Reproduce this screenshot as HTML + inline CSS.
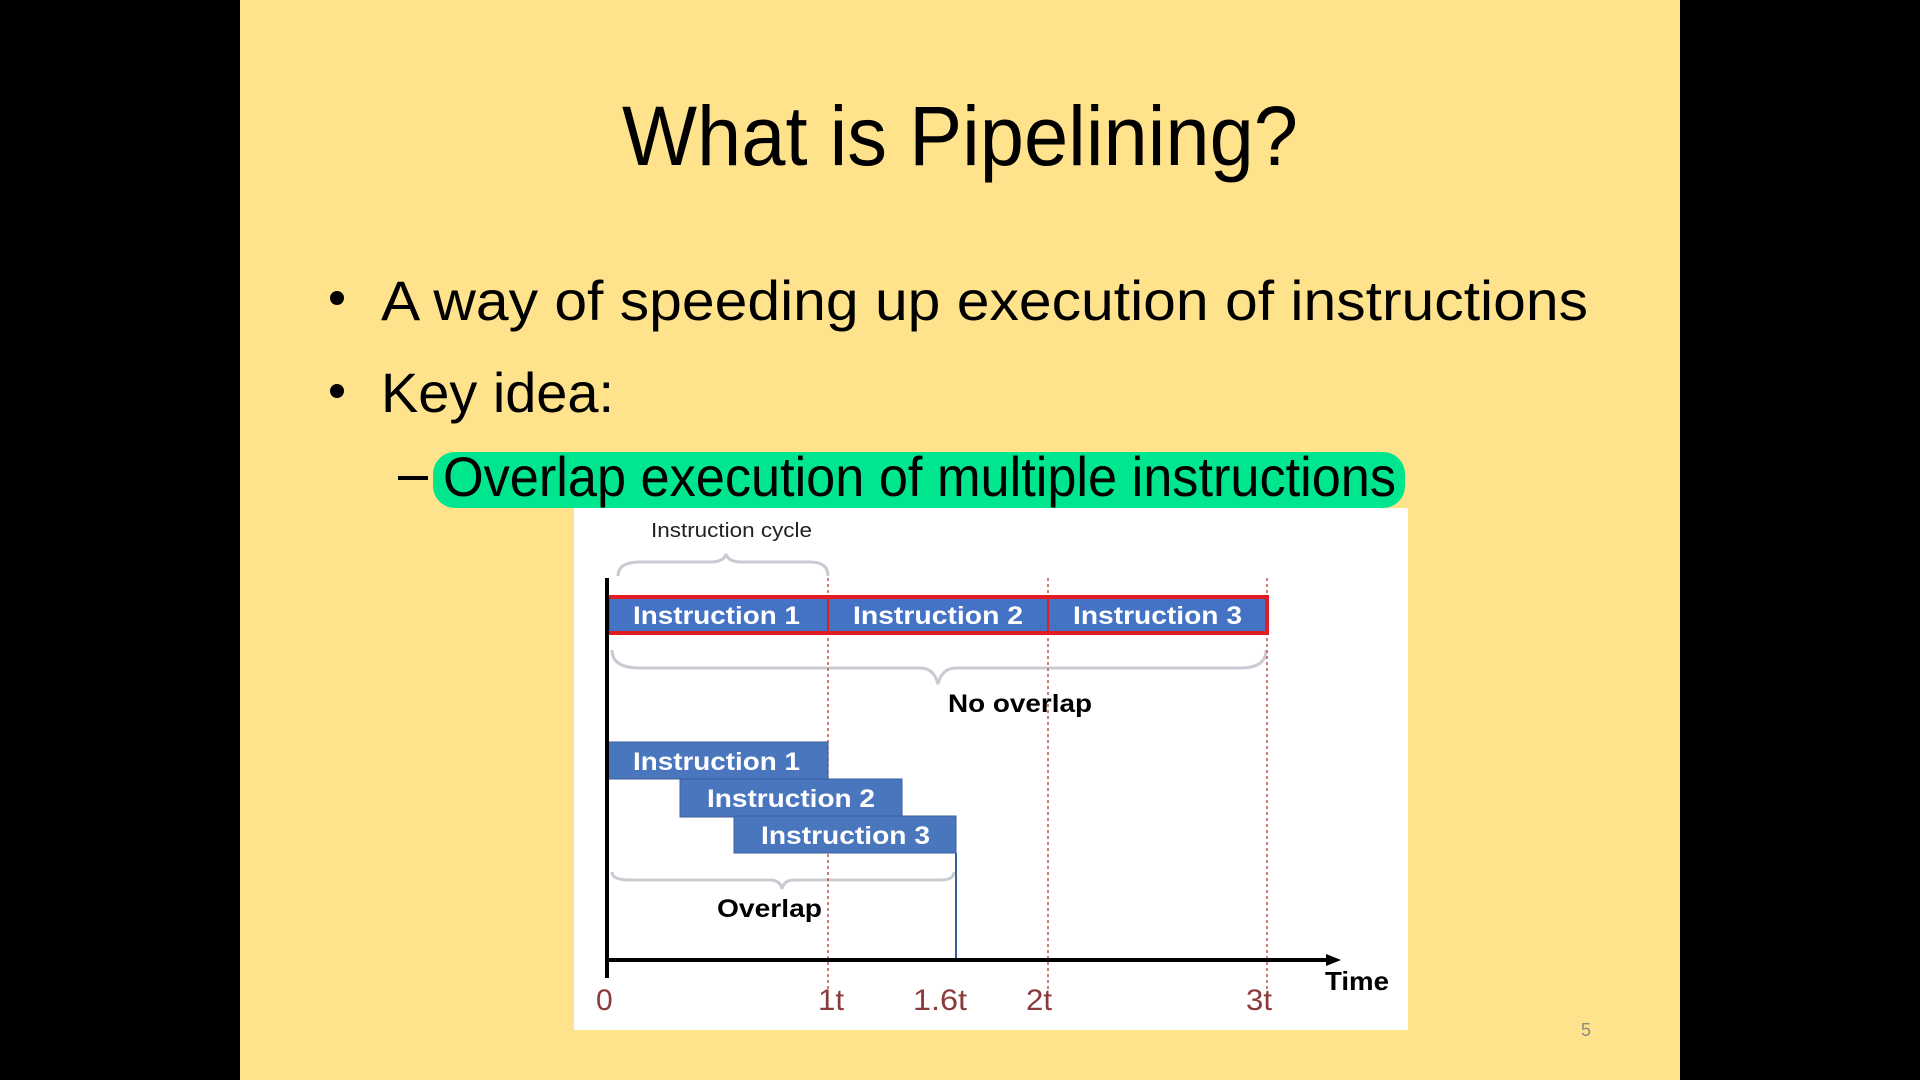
<!DOCTYPE html>
<html><head><meta charset="utf-8"><style>
html,body{margin:0;padding:0;background:#000;width:1920px;height:1080px;overflow:hidden}
svg{display:block}
</style></head><body>
<svg width="1920" height="1080" viewBox="0 0 1920 1080" xmlns="http://www.w3.org/2000/svg" font-family="Liberation Sans, sans-serif">
<rect x="0" y="0" width="1920" height="1080" fill="#000"/>
<rect x="240" y="0" width="1440" height="1080" fill="#ffe38c"/>
<text x="622" y="165" font-size="84" textLength="676" lengthAdjust="spacingAndGlyphs" fill="#000">What is Pipelining?</text>
<circle cx="337" cy="298" r="7" fill="#000"/>
<text x="381" y="320" font-size="56" textLength="1207" lengthAdjust="spacingAndGlyphs" fill="#000">A way of speeding up execution of instructions</text>
<circle cx="337" cy="391" r="7" fill="#000"/>
<text x="381" y="412" font-size="56" textLength="233" lengthAdjust="spacingAndGlyphs" fill="#000">Key idea:</text>
<rect x="398" y="476" width="30" height="4" fill="#000"/>
<rect x="433" y="452" width="972" height="56" rx="22" fill="#00e68e"/>
<text x="443" y="496" font-size="56" textLength="953" lengthAdjust="spacingAndGlyphs" fill="#000">Overlap execution of multiple instructions</text>
<!-- diagram -->
<rect x="574" y="508" width="834" height="522" fill="#fff"/>
<text x="651" y="537" font-size="20" textLength="161" lengthAdjust="spacingAndGlyphs" fill="#222">Instruction cycle</text>
<g fill="none" stroke="#c8ccd2" stroke-width="3">
<path d="M618 576 Q618 562 640 562 L710 562 Q724 562 726 554 Q728 562 742 562 L810 562 Q828 562 828 576"/>
<path d="M612 650 Q612 668 640 668 L920 668 Q934 668 938 684 Q942 668 956 668 L1240 668 Q1266 668 1266 650"/>
<path d="M612 872 Q612 880 630 880 L770 880 Q780 880 782 889 Q784 880 794 880 L940 880 Q954 880 954 872"/>
</g>
<g stroke="#c0504d" stroke-width="1.5" stroke-dasharray="3,3">
<line x1="828" y1="578" x2="828" y2="990"/>
<line x1="1048" y1="578" x2="1048" y2="990"/>
<line x1="1267" y1="578" x2="1267" y2="990"/>
</g>
<rect x="608" y="597" width="659" height="36" fill="#4472c4" stroke="#e31b23" stroke-width="4"/>
<line x1="828" y1="597" x2="828" y2="633" stroke="#e31b23" stroke-width="2"/>
<line x1="1048" y1="597" x2="1048" y2="633" stroke="#e31b23" stroke-width="2"/>
<g fill="#fff" font-weight="bold" font-size="25">
<text x="633" y="624" textLength="167" lengthAdjust="spacingAndGlyphs">Instruction 1</text>
<text x="853" y="624" textLength="170" lengthAdjust="spacingAndGlyphs">Instruction 2</text>
<text x="1073" y="624" textLength="169" lengthAdjust="spacingAndGlyphs">Instruction 3</text>
</g>
<text x="948" y="712" font-size="25" font-weight="bold" textLength="144" lengthAdjust="spacingAndGlyphs" fill="#000">No overlap</text>
<rect x="608" y="742" width="220" height="37" fill="#4a76bd" stroke="#3a5f9a" stroke-width="1"/>
<rect x="680" y="779" width="222" height="38" fill="#4a76bd" stroke="#3a5f9a" stroke-width="1"/>
<rect x="734" y="816" width="222" height="37" fill="#4a76bd" stroke="#3a5f9a" stroke-width="1"/>
<g fill="#fff" font-weight="bold" font-size="25">
<text x="633" y="770" textLength="167" lengthAdjust="spacingAndGlyphs">Instruction 1</text>
<text x="707" y="807" textLength="168" lengthAdjust="spacingAndGlyphs">Instruction 2</text>
<text x="761" y="844" textLength="169" lengthAdjust="spacingAndGlyphs">Instruction 3</text>
</g>
<line x1="956" y1="853" x2="956" y2="960" stroke="#3a5f9a" stroke-width="2"/>
<text x="717" y="917" font-size="25" font-weight="bold" textLength="105" lengthAdjust="spacingAndGlyphs" fill="#000">Overlap</text>
<line x1="607" y1="578" x2="607" y2="978" stroke="#000" stroke-width="4"/>
<line x1="607" y1="960" x2="1330" y2="960" stroke="#000" stroke-width="4"/>
<path d="M1326 954 L1341 960 L1326 966 Z" fill="#000"/>
<text x="1325" y="990" font-size="26" font-weight="bold" textLength="64" lengthAdjust="spacingAndGlyphs" fill="#000">Time</text>
<g fill="#8b3a3a" font-size="30">
<text x="596" y="1010">0</text>
<text x="818" y="1010" textLength="26" lengthAdjust="spacingAndGlyphs">1t</text>
<text x="913" y="1010" textLength="54" lengthAdjust="spacingAndGlyphs">1.6t</text>
<text x="1026" y="1010" textLength="26" lengthAdjust="spacingAndGlyphs">2t</text>
<text x="1246" y="1010" textLength="26" lengthAdjust="spacingAndGlyphs">3t</text>
</g>
<text x="1581" y="1036" font-size="18" fill="#8a8a8a">5</text>
</svg>
</body></html>
